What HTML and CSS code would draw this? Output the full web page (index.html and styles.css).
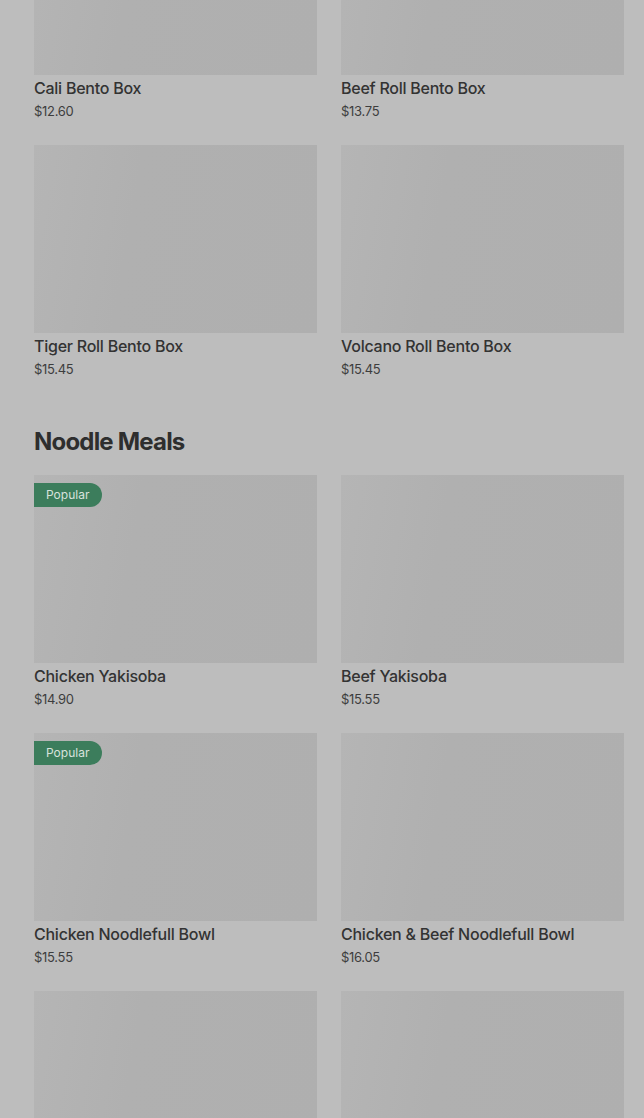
FILE: index.html
```html
<!DOCTYPE html>
<html lang="en">
<head>
    <meta charset="UTF-8">
    <meta name="viewport" content="width=device-width, initial-scale=1.0">
    <title>Menu</title>
    <link rel="stylesheet" href="styles.css">
</head>
<body>
    <main class="menu">
        <section class="category">
            <div class="items">
                <div class="item">
                    <div class="item-img"></div>
                    <div class="item-name">Cali Bento Box</div>
                    <div class="item-price">$12.60</div>
                </div>
                <div class="item">
                    <div class="item-img"></div>
                    <div class="item-name">Beef Roll Bento Box</div>
                    <div class="item-price">$13.75</div>
                </div>
                <div class="item">
                    <div class="item-img"></div>
                    <div class="item-name">Tiger Roll Bento Box</div>
                    <div class="item-price">$15.45</div>
                </div>
                <div class="item">
                    <div class="item-img"></div>
                    <div class="item-name">Volcano Roll Bento Box</div>
                    <div class="item-price">$15.45</div>
                </div>
            </div>
        </section>

        <section class="category">
            <h2 class="category-title">Noodle Meals</h2>
            <div class="items">
                <div class="item">
                    <div class="item-img">
                        <span class="badge">Popular</span>
                    </div>
                    <div class="item-name">Chicken Yakisoba</div>
                    <div class="item-price">$14.90</div>
                </div>
                <div class="item">
                    <div class="item-img"></div>
                    <div class="item-name">Beef Yakisoba</div>
                    <div class="item-price">$15.55</div>
                </div>
                <div class="item">
                    <div class="item-img">
                        <span class="badge">Popular</span>
                    </div>
                    <div class="item-name">Chicken Noodlefull Bowl</div>
                    <div class="item-price">$15.55</div>
                </div>
                <div class="item">
                    <div class="item-img"></div>
                    <div class="item-name">Chicken &amp; Beef Noodlefull Bowl</div>
                    <div class="item-price">$16.05</div>
                </div>
                <div class="item">
                    <div class="item-img"></div>
                </div>
                <div class="item">
                    <div class="item-img"></div>
                </div>
            </div>
        </section>
    </main>
</body>
</html>
```

FILE: styles.css
```css
html, body {
    background-color: #bdbdbd;
}
body {
    margin: 0;
    color: #333;
    font-family: Inter, "Liberation Sans", sans-serif;
    overflow: hidden;
    height: 1118px;
}
.menu {
    padding: 0 20px 0 34px;
    margin-top: -113px;
}
.category + .category {
    margin-top: 47px;
}
.category-title {
    margin: 0 0 17px;
    font-size: 24px;
    line-height: 32px;
    font-weight: 700;
    letter-spacing: -0.8px;
    color: #2e2e2e;
}
.items {
    display: grid;
    grid-template-columns: 1fr 1fr;
    column-gap: 24px;
    row-gap: 24px;
}
.item-img {
    position: relative;
    height: 188px;
    background: linear-gradient(100deg, #b5b5b5 0%, #b0b0b0 35%, #afafaf 100%);
}
.badge {
    position: absolute;
    top: 8px;
    left: 0;
    height: 24px;
    line-height: 24px;
    padding: 0 13px 0 12px;
    border-radius: 0 12px 12px 0;
    background-color: #3c7d5c;
    color: #d8e2dc;
    font-size: 12px;
}
.item-name {
    margin-top: 2px;
    font-size: 16px;
    line-height: 22px;
    font-weight: 500;
    letter-spacing: -0.25px;
    color: #333;
}
.item-price {
    margin-top: 2px;
    font-size: 13px;
    line-height: 20px;
    letter-spacing: -0.3px;
    color: #3d3d3d;
}
```
